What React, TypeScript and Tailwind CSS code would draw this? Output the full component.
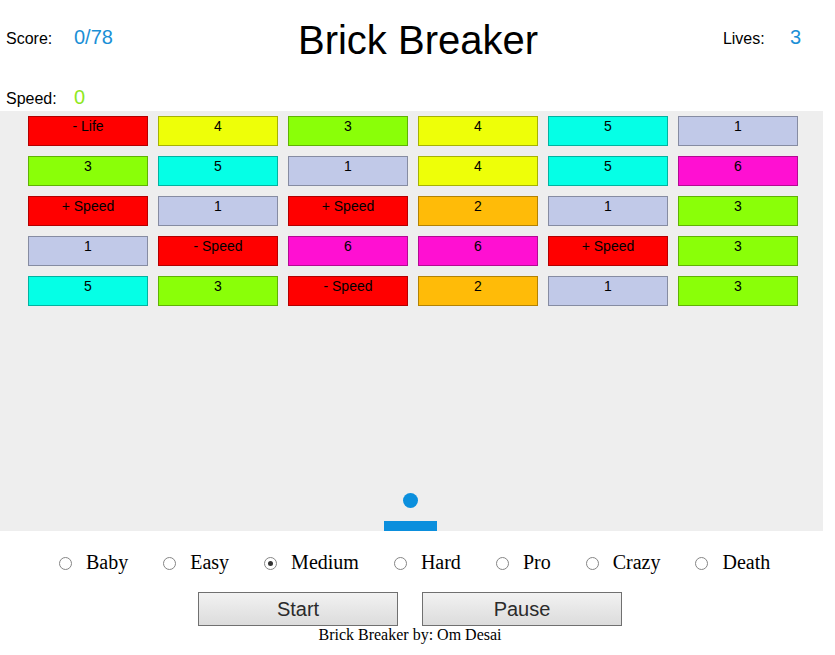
import React from "react";

type Brick = { label: string; color: string };

const COLORS: Record<string, string> = {
  "1": "bg-[#c1c9e8]",
  "2": "bg-[#ffbb08]",
  "3": "bg-[#8aff08]",
  "4": "bg-[#eeff08]",
  "5": "bg-[#05ffe6]",
  "6": "bg-[#ff10d2]",
  s: "bg-[#ff0000]",
};

const rows: string[][] = [
  ["- Life", "4", "3", "4", "5", "1"],
  ["3", "5", "1", "4", "5", "6"],
  ["+ Speed", "1", "+ Speed", "2", "1", "3"],
  ["1", "- Speed", "6", "6", "+ Speed", "3"],
  ["5", "3", "- Speed", "2", "1", "3"],
];

const bricks: Brick[] = rows.flat().map((l) => ({
  label: l,
  color: COLORS[l.length === 1 ? l : "s"],
}));

const levels = ["Baby", "Easy", "Medium", "Hard", "Pro", "Crazy", "Death"];

export default function App() {
  return (
    <div className="w-[823px] bg-white font-['Liberation_Sans',Arial,sans-serif] text-black">
      {/* Header */}
      <div className="flex h-[111px]">
        <div className="w-[200px] pl-[6px] pt-[25px]">
          <div className="flex items-baseline leading-[24px]">
            <span className="w-[68px] text-[16px]">Score:</span>
            <span className="text-[20px] text-[#1b8fd6]">0/78</span>
          </div>
          <div className="mt-[34px] flex items-baseline leading-[24px]">
            <span className="w-[68px] text-[16px]">Speed:</span>
            <span className="text-[20px] text-[#8fe81e]">0</span>
          </div>
        </div>
        <div className="flex-1 pt-[17px] text-center text-[40px] leading-[46px]">
          Brick Breaker
        </div>
        <div className="flex w-[187px] justify-end pr-[22px] pt-[25px]">
          <div className="flex items-baseline leading-[24px]">
            <span className="w-[67px] text-[16px]">Lives:</span>
            <span className="text-[20px] text-[#1b8fd6]">3</span>
          </div>
        </div>
      </div>

      {/* Canvas */}
      <div className="relative h-[420px] w-[823px] bg-[#eeeeee] pl-[28px] pt-[5px]">
        <div className="grid grid-cols-[repeat(6,120px)] gap-[10px]">
          {bricks.map((b, i) => (
            <div
              key={i}
              className={`h-[30px] border border-black/30 pt-[1px] text-center text-[14px] leading-[16px] ${b.color}`}
            >
              {b.label}
            </div>
          ))}
        </div>
        <div className="absolute left-[403px] top-[382px] h-[15px] w-[15px] rounded-full bg-[#0b8fdd]" />
        <div className="absolute left-[384px] top-[410px] h-[10px] w-[53px] bg-[#0b8fdd]" />
      </div>

      {/* Difficulty */}
      <div className="mt-[19px] flex items-center pl-[59px] font-['Liberation_Serif','Times_New_Roman',serif] text-[20px] leading-[24px]">
        {levels.map((l) => (
          <div key={l} className="mr-[35px] flex items-center">
            <span className="flex h-[13px] w-[13px] translate-y-[1px] items-center justify-center rounded-full border border-[#858585] bg-white">
              {l === "Medium" && (
                <span className="h-[5px] w-[5px] rounded-full bg-[#333333]" />
              )}
            </span>
            <span className="ml-[14px]">{l}</span>
          </div>
        ))}
      </div>

      {/* Buttons */}
      <div className="mt-[18px] flex justify-center gap-[24px] pr-[3px]">
        {["Start", "Pause"].map((t) => (
          <button
            key={t}
            className="h-[34px] w-[200px] border border-[#707070] bg-gradient-to-b from-[#f2f2f2] to-[#dcdcdc] text-[20px] leading-[24px] text-[#2b2b2b]"
          >
            {t}
          </button>
        ))}
      </div>
      <div className="pr-[3px] text-center font-['Liberation_Serif','Times_New_Roman',serif] text-[16px] leading-[18px]">
        Brick Breaker by: Om Desai
      </div>
    </div>
  );
}
